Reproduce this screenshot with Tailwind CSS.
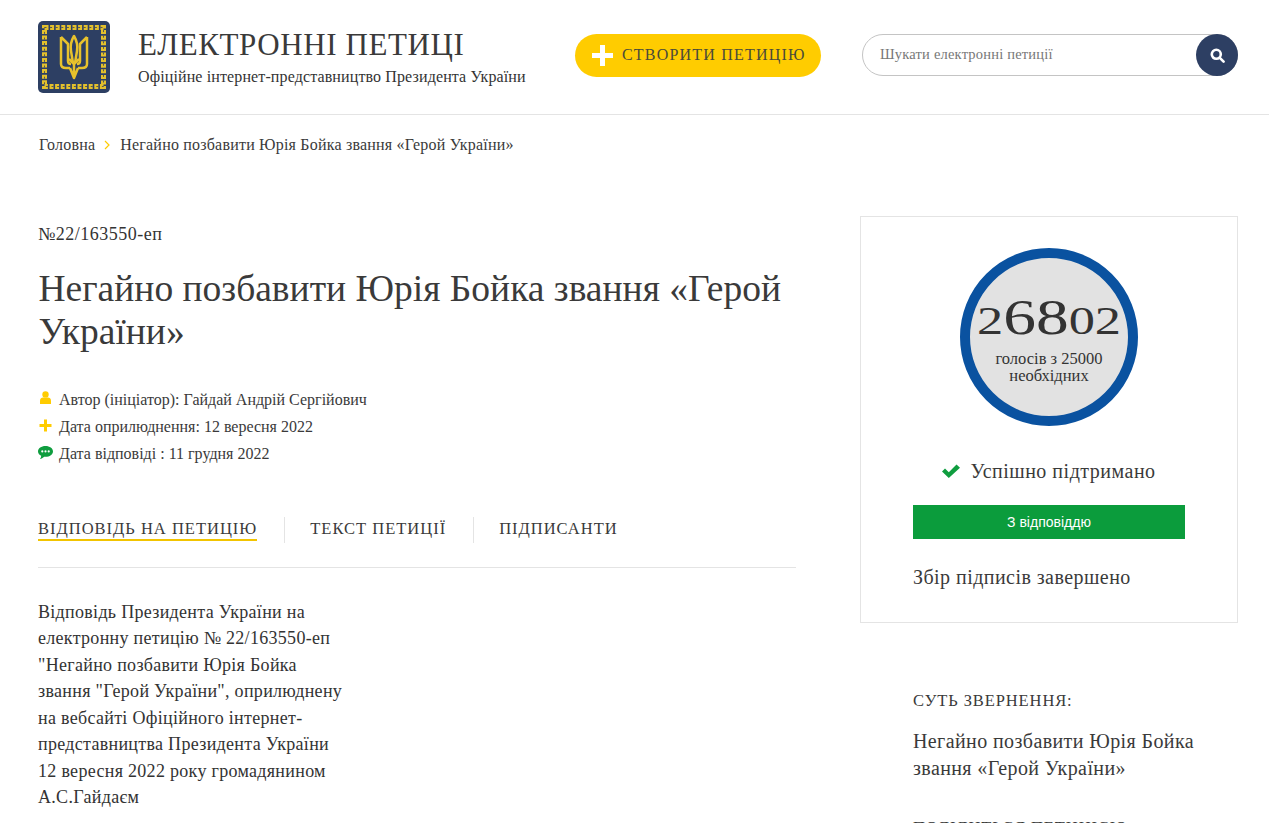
<!DOCTYPE html>
<html lang="uk">
<head>
<meta charset="UTF-8">
<title>Електронні петиції</title>
<script src="https://cdn.jsdelivr.net/npm/@tailwindcss/browser@4"></script>
</head>
<body class="bg-white h-[823px] overflow-hidden text-[#333] font-['Liberation_Serif',serif]">
<!-- Header -->
<header class="h-[115px] border-b border-[#e4e4e4] pl-[38px] pr-[31px] flex items-center">
  <svg class="w-[72px] h-[72px] shrink-0" viewBox="0 0 72 72">
    <rect width="72" height="72" rx="5" fill="#2d3f63"/>
    <rect x="6.500" y="6.500" width="59" height="59" fill="none" stroke="#e3c02c" stroke-width="5" stroke-dasharray="4 1.600"/>
    <rect x="6.500" y="6.500" width="59" height="59" fill="none" stroke="#2d3f63" stroke-width="0.800" stroke-dasharray="2 3.600"/>
    <g fill="none" stroke="#e8c22c" stroke-width="2.500" stroke-linejoin="round">
      <path d="M23 16l7 7v17c0 2 1 3 3 3M23 16v27c0 3 2 4 5 4h4"/>
      <path d="M49 16l-7 7v17c0 2-1 3-3 3M49 16v27c0 3-2 4-5 4h-4"/>
      <path d="M36 15c-3 5-4 9-3 15l2 12h2l2-12c1-6 0-10-3-15z"/>
      <path d="M31 38l5 5 5-5M32 47l4 10 4-10M36 43v14"/>
    </g>
  </svg>
  <div class="ml-[28px] w-[437px] shrink-0">
    <div class="text-[31px] leading-[36px] tracking-[0.6px] text-[#3a3a3a]">ЕЛЕКТРОННІ ПЕТИЦІ</div>
    <div class="text-[16px] leading-[20px] mt-[4px] tracking-[0.12px] whitespace-nowrap">Офіційне інтернет-представництво Президента України</div>
  </div>
  <a class="w-[246px] h-[43px] mb-[4px] shrink-0 rounded-full bg-[#ffcc00] flex items-center pl-[17px] text-[16px] tracking-[1.200px] text-[#4a4a3a] whitespace-nowrap">
    <svg class="w-[21px] h-[21px] mr-[9px] shrink-0" viewBox="0 0 21 21"><path d="M8 0h5v8h8v5h-8v8H8v-8H0V8h8z" fill="#fff"/></svg>
    СТВОРИТИ ПЕТИЦІЮ
  </a>
  <div class="ml-[41px] w-[376px] h-[42px] mb-[4px] shrink-0 relative rounded-full border border-[#c4c4c4] flex items-center pl-[17px] text-[14.500px] tracking-[0.2px] text-[#777]">
    Шукати електронні петиції
    <span class="absolute right-[-1px] top-[-1px] w-[42px] h-[42px] rounded-full bg-[#2d3f63] flex items-center justify-center">
      <svg class="w-[15px] h-[15px]" viewBox="0 0 16 16" fill="none" stroke="#fff" stroke-width="2.800"><circle cx="6.700" cy="6.700" r="4.800"/><path d="M10.200 10.200l4.300 4.300" stroke-linecap="round"/></svg>
    </span>
  </div>
</header>
<!-- Breadcrumb -->
<nav class="pl-[39px] pt-[21px] h-[101px] flex items-start text-[16px] leading-[18px] tracking-[0.2px] text-[#3a3a3a]">
  <span>Головна</span>
  <svg class="w-[7px] h-[10px] mx-[9px] mt-[4px]" viewBox="0 0 7 10" fill="none" stroke="#ffcc00" stroke-width="1.200"><path d="M1 1l4 4-4 4"/></svg>
  <span>Негайно позбавити Юрія Бойка звання «Герой України»</span>
</nav>
<main class="pl-[38px] pr-[31px] flex justify-between">
  <!-- Petition -->
  <div class="w-[758px]">
    <div class="text-[18px] leading-[20px] mt-[8px] tracking-[0.5px]">№22/163550-еп</div>
    <h1 class="text-[37.500px] leading-[43px] text-[#3a3a3a] mt-[23px] pl-[0.5px]">Негайно позбавити Юрія Бойка звання «Герой України»</h1>
    <ul class="mt-[33px] text-[16px] leading-[27px] text-[#3a3a3a]">
      <li class="flex items-center">
        <svg class="w-[13px] h-[13px] ml-[1px] mr-[7px] mb-[4px]" viewBox="0 0 13 13" fill="#ffcc00"><circle cx="6.500" cy="3.400" r="3.200"/><path d="M1 13V9.500C1 7.500 2.500 6.500 4 6.500h5c1.500 0 3 1 3 3V13z"/></svg>
        Автор (ініціатор): Гайдай Андрій Сергійович
      </li>
      <li class="flex items-center">
        <svg class="w-[13px] h-[13px] ml-[1px] mr-[7px] mb-[3px]" viewBox="0 0 13 13" fill="#ffcc00"><path d="M5 .5h3v4.500h4.500v3H8v4.500H5V8H.5V5H5z"/></svg>
        Дата оприлюднення: 12 вересня 2022
      </li>
      <li class="flex items-center">
        <svg class="w-[15px] h-[13px] mr-[6px] mb-[3px]" viewBox="0 0 14 12"><path d="M7 0c3.900 0 7 2.200 7 5s-3.100 5-7 5l-1.200-.1C4.600 11 3.200 11.800 1.800 12c.8-.9 1.200-2 1.200-3C1.200 8.100 0 6.700 0 5c0-2.800 3.100-5 7-5z" fill="#0f9d3f"/><g fill="#fff"><circle cx="4" cy="5" r="1"/><circle cx="7" cy="5" r="1"/><circle cx="10" cy="5" r="1"/></g></svg>
        Дата відповіді : 11 грудня 2022
      </li>
    </ul>
    <div class="mt-[50px] h-[51px] border-b border-[#e4e4e4]">
      <div class="flex items-start text-[16.500px] tracking-[1px] text-[#3a3a3a]">
        <a class="h-[24px] leading-[24px] border-b-2 border-[#f2c400]">ВІДПОВІДЬ НА ПЕТИЦІЮ</a>
        <a class="h-[26px] leading-[24px] ml-[27px] pl-[25px] border-l border-[#e4e4e4]">ТЕКСТ ПЕТИЦІЇ</a>
        <a class="h-[26px] leading-[24px] ml-[27px] pl-[25px] border-l border-[#e4e4e4]">ПІДПИСАНТИ</a>
      </div>
    </div>
    <p class="w-[310px] mt-[31px] text-[18px] leading-[26.450px] tracking-[0.3px]">Відповідь Президента України на електронну петицію № 22/163550-еп "Негайно позбавити Юрія Бойка звання "Герой України", оприлюднену на вебсайті Офіційного інтернет-представництва Президента України 12 вересня 2022 року громадянином А.С.Гайдаєм</p>
  </div>
  <!-- Sidebar -->
  <aside class="w-[378px]">
    <div class="h-[407px] border border-[#e4e4e4] px-[52px] pt-[31px]">
      <div class="w-[178px] h-[178px] mx-auto rounded-full border-[10px] border-[#0a52a0] bg-[#e2e2e2] flex flex-col items-center pt-[28px]">
        <div class="h-[62px] flex items-baseline whitespace-nowrap leading-[62px] text-[#333] text-[40px] scale-x-[1.310]">2<span class="text-[50px]">68</span>02</div>
        <div class="text-[16.500px] leading-[17px] text-center mt-[2px] w-[130px]">голосів з 25000 необхідних</div>
      </div>
      <div class="flex items-center justify-center mt-[33px] text-[20px] leading-[24px] tracking-[0.5px] text-[#3a3a3a]">
        <svg class="w-[18px] h-[14px] mr-[10px]" viewBox="0 0 18 14"><path d="M0 7.500l3-3 3.800 3.800L14.500 .5 18 3.700 6.800 14z" fill="#0f9d3f"/></svg>
        Успішно підтримано
      </div>
      <div class="h-[34px] mt-[22px] bg-[#0b9c3c] text-white text-[14px] flex items-center justify-center font-['Liberation_Sans',sans-serif]">З відповіддю</div>
      <div class="mt-[26px] text-[20px] leading-[24px] tracking-[0.45px] text-[#3a3a3a]">Збір підписів завершено</div>
    </div>
    <div class="pl-[53px] mt-[68px]">
      <div class="text-[16.500px] leading-[20px] tracking-[0.900px] text-[#3a3a3a]">СУТЬ ЗВЕРНЕННЯ:</div>
      <div class="mt-[17px] text-[20px] leading-[27px] tracking-[0.400px] text-[#3a3a3a] w-[300px]">Негайно позбавити Юрія Бойка звання «Герой України»</div>
      <div class="mt-[36px] text-[16.500px] leading-[20px] tracking-[0.900px] text-[#3a3a3a]">ПОДІЛИТЬСЯ ПЕТИЦІЄЮ:</div>
    </div>
  </aside>
</main>
</body>
</html>
